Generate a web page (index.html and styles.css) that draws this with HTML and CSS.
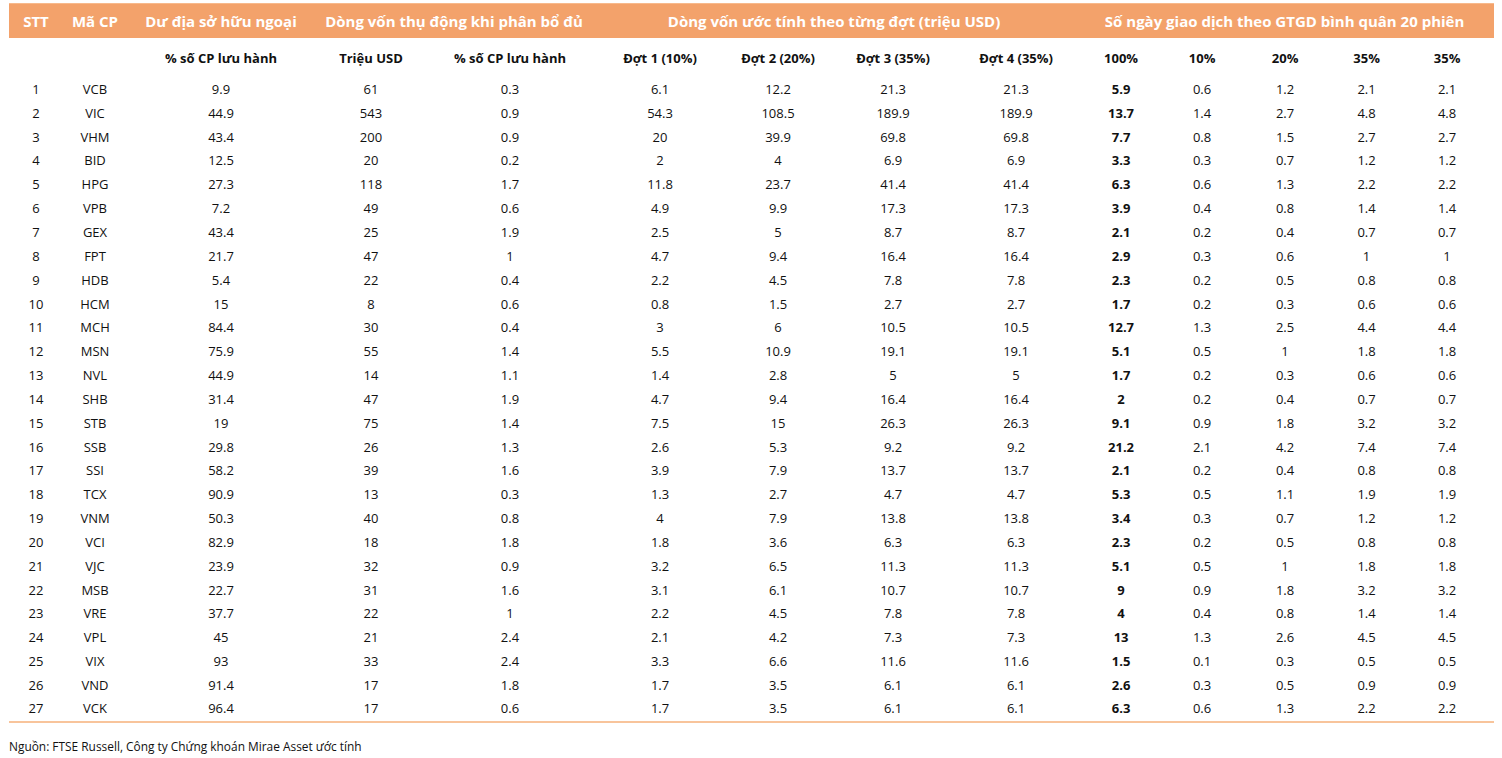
FILE: index.html
```html
<!DOCTYPE html>
<html lang="vi">
<head>
<meta charset="utf-8">
<title>Dòng vốn FTSE</title>
<link rel="stylesheet" href="styles.css">
</head>
<body>
<div class="page">
<table class="tbl">
<colgroup>
<col style="width:54px"><col style="width:64px"><col style="width:188px"><col style="width:112px"><col style="width:166px"><col style="width:134px"><col style="width:102px"><col style="width:128px"><col style="width:118px"><col style="width:92px"><col style="width:70px"><col style="width:96px"><col style="width:67px"><col style="width:94px">
</colgroup>
<thead>
<tr class="hd">
<th>STT</th><th>Mã CP</th><th>Dư địa sở hữu ngoại</th><th colspan="2">Dòng vốn thụ động khi phân bổ đủ</th><th colspan="4">Dòng vốn ước tính theo từng đợt (triệu USD)</th><th colspan="5">Số ngày giao dịch theo GTGD bình quân 20 phiên</th>
</tr>
<tr class="sub">
<th></th><th></th><th>% số CP lưu hành</th><th>Triệu USD</th><th>% số CP lưu hành</th><th>Đợt 1 (10%)</th><th>Đợt 2 (20%)</th><th>Đợt 3 (35%)</th><th>Đợt 4 (35%)</th><th>100%</th><th>10%</th><th>20%</th><th>35%</th><th>35%</th>
</tr>
</thead>
<tbody>
<tr><td>1</td><td>VCB</td><td>9.9</td><td>61</td><td>0.3</td><td>6.1</td><td>12.2</td><td>21.3</td><td>21.3</td><td>5.9</td><td>0.6</td><td>1.2</td><td>2.1</td><td>2.1</td></tr>
<tr><td>2</td><td>VIC</td><td>44.9</td><td>543</td><td>0.9</td><td>54.3</td><td>108.5</td><td>189.9</td><td>189.9</td><td>13.7</td><td>1.4</td><td>2.7</td><td>4.8</td><td>4.8</td></tr>
<tr><td>3</td><td>VHM</td><td>43.4</td><td>200</td><td>0.9</td><td>20</td><td>39.9</td><td>69.8</td><td>69.8</td><td>7.7</td><td>0.8</td><td>1.5</td><td>2.7</td><td>2.7</td></tr>
<tr><td>4</td><td>BID</td><td>12.5</td><td>20</td><td>0.2</td><td>2</td><td>4</td><td>6.9</td><td>6.9</td><td>3.3</td><td>0.3</td><td>0.7</td><td>1.2</td><td>1.2</td></tr>
<tr><td>5</td><td>HPG</td><td>27.3</td><td>118</td><td>1.7</td><td>11.8</td><td>23.7</td><td>41.4</td><td>41.4</td><td>6.3</td><td>0.6</td><td>1.3</td><td>2.2</td><td>2.2</td></tr>
<tr><td>6</td><td>VPB</td><td>7.2</td><td>49</td><td>0.6</td><td>4.9</td><td>9.9</td><td>17.3</td><td>17.3</td><td>3.9</td><td>0.4</td><td>0.8</td><td>1.4</td><td>1.4</td></tr>
<tr><td>7</td><td>GEX</td><td>43.4</td><td>25</td><td>1.9</td><td>2.5</td><td>5</td><td>8.7</td><td>8.7</td><td>2.1</td><td>0.2</td><td>0.4</td><td>0.7</td><td>0.7</td></tr>
<tr><td>8</td><td>FPT</td><td>21.7</td><td>47</td><td>1</td><td>4.7</td><td>9.4</td><td>16.4</td><td>16.4</td><td>2.9</td><td>0.3</td><td>0.6</td><td>1</td><td>1</td></tr>
<tr><td>9</td><td>HDB</td><td>5.4</td><td>22</td><td>0.4</td><td>2.2</td><td>4.5</td><td>7.8</td><td>7.8</td><td>2.3</td><td>0.2</td><td>0.5</td><td>0.8</td><td>0.8</td></tr>
<tr><td>10</td><td>HCM</td><td>15</td><td>8</td><td>0.6</td><td>0.8</td><td>1.5</td><td>2.7</td><td>2.7</td><td>1.7</td><td>0.2</td><td>0.3</td><td>0.6</td><td>0.6</td></tr>
<tr><td>11</td><td>MCH</td><td>84.4</td><td>30</td><td>0.4</td><td>3</td><td>6</td><td>10.5</td><td>10.5</td><td>12.7</td><td>1.3</td><td>2.5</td><td>4.4</td><td>4.4</td></tr>
<tr><td>12</td><td>MSN</td><td>75.9</td><td>55</td><td>1.4</td><td>5.5</td><td>10.9</td><td>19.1</td><td>19.1</td><td>5.1</td><td>0.5</td><td>1</td><td>1.8</td><td>1.8</td></tr>
<tr><td>13</td><td>NVL</td><td>44.9</td><td>14</td><td>1.1</td><td>1.4</td><td>2.8</td><td>5</td><td>5</td><td>1.7</td><td>0.2</td><td>0.3</td><td>0.6</td><td>0.6</td></tr>
<tr><td>14</td><td>SHB</td><td>31.4</td><td>47</td><td>1.9</td><td>4.7</td><td>9.4</td><td>16.4</td><td>16.4</td><td>2</td><td>0.2</td><td>0.4</td><td>0.7</td><td>0.7</td></tr>
<tr><td>15</td><td>STB</td><td>19</td><td>75</td><td>1.4</td><td>7.5</td><td>15</td><td>26.3</td><td>26.3</td><td>9.1</td><td>0.9</td><td>1.8</td><td>3.2</td><td>3.2</td></tr>
<tr><td>16</td><td>SSB</td><td>29.8</td><td>26</td><td>1.3</td><td>2.6</td><td>5.3</td><td>9.2</td><td>9.2</td><td>21.2</td><td>2.1</td><td>4.2</td><td>7.4</td><td>7.4</td></tr>
<tr><td>17</td><td>SSI</td><td>58.2</td><td>39</td><td>1.6</td><td>3.9</td><td>7.9</td><td>13.7</td><td>13.7</td><td>2.1</td><td>0.2</td><td>0.4</td><td>0.8</td><td>0.8</td></tr>
<tr><td>18</td><td>TCX</td><td>90.9</td><td>13</td><td>0.3</td><td>1.3</td><td>2.7</td><td>4.7</td><td>4.7</td><td>5.3</td><td>0.5</td><td>1.1</td><td>1.9</td><td>1.9</td></tr>
<tr><td>19</td><td>VNM</td><td>50.3</td><td>40</td><td>0.8</td><td>4</td><td>7.9</td><td>13.8</td><td>13.8</td><td>3.4</td><td>0.3</td><td>0.7</td><td>1.2</td><td>1.2</td></tr>
<tr><td>20</td><td>VCI</td><td>82.9</td><td>18</td><td>1.8</td><td>1.8</td><td>3.6</td><td>6.3</td><td>6.3</td><td>2.3</td><td>0.2</td><td>0.5</td><td>0.8</td><td>0.8</td></tr>
<tr><td>21</td><td>VJC</td><td>23.9</td><td>32</td><td>0.9</td><td>3.2</td><td>6.5</td><td>11.3</td><td>11.3</td><td>5.1</td><td>0.5</td><td>1</td><td>1.8</td><td>1.8</td></tr>
<tr><td>22</td><td>MSB</td><td>22.7</td><td>31</td><td>1.6</td><td>3.1</td><td>6.1</td><td>10.7</td><td>10.7</td><td>9</td><td>0.9</td><td>1.8</td><td>3.2</td><td>3.2</td></tr>
<tr><td>23</td><td>VRE</td><td>37.7</td><td>22</td><td>1</td><td>2.2</td><td>4.5</td><td>7.8</td><td>7.8</td><td>4</td><td>0.4</td><td>0.8</td><td>1.4</td><td>1.4</td></tr>
<tr><td>24</td><td>VPL</td><td>45</td><td>21</td><td>2.4</td><td>2.1</td><td>4.2</td><td>7.3</td><td>7.3</td><td>13</td><td>1.3</td><td>2.6</td><td>4.5</td><td>4.5</td></tr>
<tr><td>25</td><td>VIX</td><td>93</td><td>33</td><td>2.4</td><td>3.3</td><td>6.6</td><td>11.6</td><td>11.6</td><td>1.5</td><td>0.1</td><td>0.3</td><td>0.5</td><td>0.5</td></tr>
<tr><td>26</td><td>VND</td><td>91.4</td><td>17</td><td>1.8</td><td>1.7</td><td>3.5</td><td>6.1</td><td>6.1</td><td>2.6</td><td>0.3</td><td>0.5</td><td>0.9</td><td>0.9</td></tr>
<tr><td>27</td><td>VCK</td><td>96.4</td><td>17</td><td>0.6</td><td>1.7</td><td>3.5</td><td>6.1</td><td>6.1</td><td>6.3</td><td>0.6</td><td>1.3</td><td>2.2</td><td>2.2</td></tr>
</tbody>
</table>
<p class="note">Nguồn: FTSE Russell, Công ty Chứng khoán Mirae Asset ước tính</p>
</div>
</body>
</html>
```
FILE: styles.css
```css
html, body {
  margin: 0;
  padding: 0;
  background: #ffffff;
}
.page {
  padding: 3px 0 0 9px;
  font-family: "Open Sans", "Noto Sans", sans-serif;
  color: #111111;
}
.tbl {
  width: 1485px;
  table-layout: fixed;
  border-collapse: collapse;
  border-spacing: 0;
}
.tbl th, .tbl td {
  padding: 0;
  text-align: center;
  white-space: nowrap;
}
.hd th {
  background: #f3a26b;
  color: #ffffff;
  font-size: 15px;
  font-weight: 700;
  height: 34px;
  border-top: 1px solid #f7b98c;
}
.sub th {
  font-size: 13px;
  font-weight: 700;
  height: 39px;
  color: #111111;
}
.tbl tbody td {
  font-size: 13px;
  height: 23.85px;
  color: #111111;
}
.tbl tbody td:nth-child(10) {
  font-weight: 700;
}
.tbl tbody tr:last-child td {
  height: 22.5px;
  vertical-align: top;
  padding-top: 2px;
  border-bottom: 2px solid #f8c49b;
}
.note {
  margin: 15px 0 0 0;
  font-size: 11.9px;
  color: #111111;
}
```
